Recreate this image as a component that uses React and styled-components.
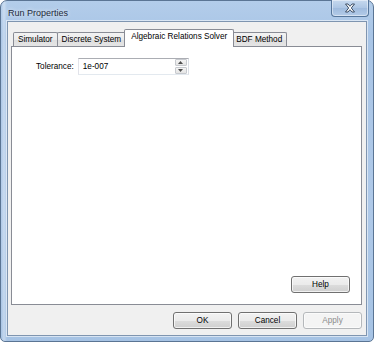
import React from 'react';
import styled, { createGlobalStyle } from 'styled-components';

const GlobalStyle = createGlobalStyle`
  html, body {
    margin: 0;
    padding: 0;
    background: #ffffff;
  }
  body {
    font-family: "Liberation Sans", Arial, sans-serif;
  }
`;

const Window = styled.div`
  box-sizing: border-box;
  width: 374px;
  height: 342px;
  display: flex;
  flex-direction: column;
  padding: 0 6px 5px 6px;
  border: 1px solid #5b7594;
  border-radius: 7px 7px 5px 5px;
  background:
    linear-gradient(90deg, rgba(255,255,255,0) 0, rgba(255,255,255,0.35) 3px, rgba(255,255,255,0) 6px),
    linear-gradient(180deg, #b3cdea 0%, #a9c5e6 10%, #afc9e8 60%, #a6c3e4 100%);
`;

const TitleBar = styled.div`
  height: 20px;
  display: flex;
  align-items: flex-start;
  justify-content: space-between;
`;

const Title = styled.span`
  margin-top: 7px;
  margin-left: 1px;
  font-size: 9px;
  color: #1e2a3a;
  text-shadow: 0 0 4px rgba(255,255,255,0.9);
`;

const CloseButton = styled.div`
  box-sizing: border-box;
  width: 38px;
  height: 17px;
  margin-top: -1px;
  margin-right: -2px;
  display: flex;
  align-items: center;
  justify-content: center;
  border: 1px solid #56769b;
  border-top: none;
  border-radius: 0 0 4px 4px;
  background: linear-gradient(180deg, #c6d9ee 0%, #adc6e4 50%, #9fbbdd 51%, #b3cbe8 100%);
  box-shadow: inset 0 0 0 1px rgba(255,255,255,0.45);
`;

const Client = styled.div`
  flex: 1;
  display: flex;
  flex-direction: column;
  background: #f0f0f0;
  border: 1px solid #7f95b0;
  box-shadow: 0 0 0 1px rgba(255,255,255,0.55);
  padding: 7px 4px 0 3px;
`;

const TabStrip = styled.div`
  display: flex;
  align-items: flex-end;
  height: 17px;
  padding-left: 2px;
`;

const Tab = styled.div`
  box-sizing: border-box;
  height: ${p => (p.$active ? '18px' : '14px')};
  margin: ${p => (p.$active ? '0 -2px -1px -2px' : '0 0 0 -1px')};
  padding: ${p => (p.$active ? '2px 6px 0' : '0 4px')};
  display: flex;
  align-items: ${p => (p.$active ? 'flex-start' : 'center')};
  font-size: 8.2px;
  color: #000;
  white-space: nowrap;
  border: 1px solid #898c95;
  border-bottom: none;
  border-radius: 2px 2px 0 0;
  background: ${p =>
    p.$active ? '#ffffff' : 'linear-gradient(180deg, #f3f3f3 0%, #ebebeb 50%, #dedede 51%, #e5e5e5 100%)'};
  position: relative;
  z-index: ${p => (p.$active ? 2 : 1)};
  &:first-child {
    margin-left: 0;
  }
`;

const Panel = styled.div`
  flex: 1;
  display: flex;
  flex-direction: column;
  background: #ffffff;
  border: 1px solid #898c95;
  padding: 11px 0 0 24px;
`;

const FieldRow = styled.div`
  display: flex;
  align-items: center;
  gap: 4px;
`;

const Label = styled.span`
  font-size: 8.2px;
  color: #000;
`;

const SpinBox = styled.div`
  box-sizing: border-box;
  width: 111px;
  height: 17px;
  display: flex;
  align-items: center;
  justify-content: space-between;
  border: 1px solid #abadb3;
  border-left-color: #e2e3ea;
  border-right-color: #dbdfe6;
  border-bottom-color: #e3e9ef;
  background: #fff;
  padding: 0 1px 0 4px;
  font-size: 8.2px;
  color: #000;
`;

const Spinner = styled.div`
  display: flex;
  flex-direction: column;
  gap: 1px;
`;

const SpinArrow = styled.div`
  box-sizing: border-box;
  width: 12px;
  height: 7px;
  display: flex;
  align-items: center;
  justify-content: center;
  border: 1px solid #c7cacf;
  border-radius: 1px;
  background: linear-gradient(180deg, #f4f4f4, #e4e4e4);
`;

const Button = styled.div`
  box-sizing: border-box;
  width: ${p => p.$w || 59}px;
  height: 17px;
  display: flex;
  align-items: center;
  justify-content: center;
  font-size: 8.2px;
  color: ${p => (p.$disabled ? '#8c8c8c' : '#000')};
  border: 1px solid ${p => (p.$disabled ? '#b5b8bb' : '#707070')};
  border-radius: 3px;
  background: ${p =>
    p.$disabled
      ? '#f4f4f4'
      : 'linear-gradient(180deg, #f2f2f2 0%, #ebebeb 50%, #dddddd 51%, #cfcfcf 100%)'};
  box-shadow: inset 0 0 0 1px ${p => (p.$disabled ? 'rgba(255,255,255,0.6)' : 'rgba(255,255,255,0.7)')};
`;

const HelpButton = styled(Button)`
  margin-top: auto;
  align-self: flex-end;
  margin-right: 11px;
  margin-bottom: 11px;
`;

const ButtonRow = styled.div`
  display: flex;
  justify-content: flex-end;
  gap: 6px;
  padding: 7px 0 6px 0;
`;

const tabs = ['Simulator', 'Discrete System', 'Algebraic Relations Solver', 'BDF Method'];

const CloseIcon = () => (
  <svg width="12" height="10" viewBox="0 0 12 10">
    <path
      d="M1.5 1 L4 1 L6 3.3 L8 1 L10.5 1 L7.3 5 L10.5 9 L8 9 L6 6.7 L4 9 L1.5 9 L4.7 5 Z"
      fill="#ffffff"
      stroke="#2c3f57"
      strokeWidth="0.9"
      strokeLinejoin="round"
    />
  </svg>
);

const Arrow = ({ up }) => (
  <svg width="5" height="3" viewBox="0 0 5 3">
    <path d={up ? 'M0 3 L2.5 0 L5 3 Z' : 'M0 0 L2.5 3 L5 0 Z'} fill="#4d4d4d" />
  </svg>
);

export default function App() {
  return (
    <>
      <GlobalStyle />
      <Window>
        <TitleBar>
          <Title>Run Properties</Title>
          <CloseButton>
            <CloseIcon />
          </CloseButton>
        </TitleBar>
        <Client>
          <TabStrip>
            {tabs.map((t, i) => (
              <Tab key={t} $active={i === 2}>
                {t}
              </Tab>
            ))}
          </TabStrip>
          <Panel>
            <FieldRow>
              <Label>Tolerance:</Label>
              <SpinBox>
                <span>1e-007</span>
                <Spinner>
                  <SpinArrow>
                    <Arrow up />
                  </SpinArrow>
                  <SpinArrow>
                    <Arrow />
                  </SpinArrow>
                </Spinner>
              </SpinBox>
            </FieldRow>
            <HelpButton>Help</HelpButton>
          </Panel>
          <ButtonRow>
            <Button>OK</Button>
            <Button>Cancel</Button>
            <Button $disabled>Apply</Button>
          </ButtonRow>
        </Client>
      </Window>
    </>
  );
}
